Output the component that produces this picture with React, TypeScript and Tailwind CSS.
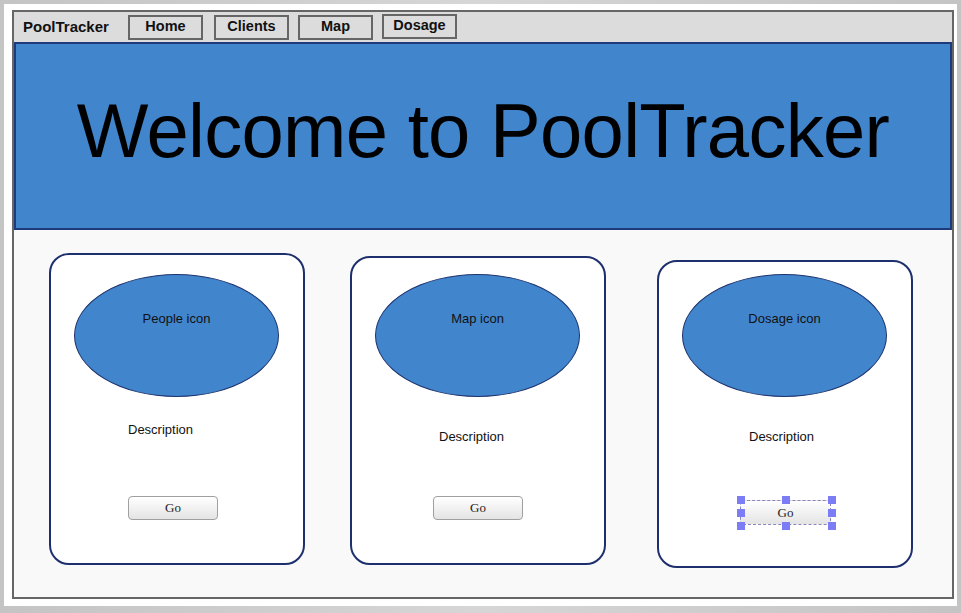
const navItems = [
  { label: 'Home', cls: 'ml-0' },
  { label: 'Clients', cls: 'ml-[11px]' },
  { label: 'Map', cls: 'ml-[9px]' },
  { label: 'Dosage', cls: 'ml-[9px] -mt-[2px]' },
]

const cards = [
  {
    label: 'People icon',
    card: 'mt-[23px] ml-[35px] h-[312px]',
    ellipse: 'mt-[19px]',
    desc: 'mt-[25px] ml-[77px]',
    go: 'mt-[57px] ml-[77px]',
    selected: false,
  },
  {
    label: 'Map icon',
    card: 'mt-[26px] ml-[45px] h-[309px]',
    ellipse: 'mt-[16px]',
    desc: 'mt-[32px] ml-[87px]',
    go: 'mt-[50px] ml-[81px]',
    selected: false,
  },
  {
    label: 'Dosage icon',
    card: 'mt-[30px] ml-[51px] h-[308px]',
    ellipse: 'mt-[12px]',
    desc: 'mt-[32px] ml-[90px]',
    go: 'mt-[55px] ml-[81px]',
    selected: true,
  },
]

function Handle({ className }: { className: string }) {
  return <span className={`absolute w-[8px] h-[8px] bg-[#7c7cf4] ${className}`} />
}

function GoButton({ selected }: { selected: boolean }) {
  if (!selected) {
    return (
      <button className="w-[90px] h-[24px] rounded-[4px] border border-[#a0a0a0] bg-gradient-to-b from-white to-[#e4e4e4] font-['Liberation_Serif',serif] font-normal text-[13px] text-[#222]">
        Go
      </button>
    )
  }
  return (
    <div className="relative w-[91px] h-[25px]">
      <button className="w-full h-full rounded-[2px] border border-dashed border-[#8a86b8] bg-gradient-to-b from-white to-[#e4e4e4] font-['Liberation_Serif',serif] font-normal text-[13px] text-[#222]">
        Go
      </button>
      <Handle className="left-[-3px] top-[-4px]" />
      <Handle className="left-[42px] top-[-4px]" />
      <Handle className="right-[-5px] top-[-4px]" />
      <Handle className="left-[-3px] top-[9px]" />
      <Handle className="right-[-5px] top-[9px]" />
      <Handle className="left-[-3px] bottom-[-5px]" />
      <Handle className="left-[42px] bottom-[-5px]" />
      <Handle className="right-[-5px] bottom-[-5px]" />
    </div>
  )
}

export default function App() {
  return (
    <div className="w-[961px] h-[613px] bg-gradient-to-r from-[#c4c4c4] via-[#d6d6d6] to-[#c4c4c4] pt-[4px] pl-[4px] font-['Liberation_Sans',Arial,sans-serif]">
      <div className="w-[953px] h-[602px] bg-white pt-[6px] pl-[8px]">
        <div className="w-[942px] h-[589px] border-2 border-[#666] flex flex-col">
          {/* nav */}
          <div className="h-[30px] bg-[#dcdcdc] flex items-center">
            <span className="ml-[9px] w-[105px] text-[15px] font-bold text-[#111]">PoolTracker</span>
            {navItems.map((item) => (
              <div
                key={item.label}
                className={`w-[75px] h-[25px] border-2 border-[#666] bg-[#dcdcdc] flex items-center justify-center text-[14.5px] font-bold text-[#111] ${item.cls}`}
              >
                {item.label}
              </div>
            ))}
          </div>

          {/* banner */}
          <div className="h-[188px] border-2 border-[#1f3a7a] bg-[#4185cd] flex justify-center pt-[49px]">
            <h1 className="text-[76px] leading-none tracking-[-0.7px] text-black">Welcome to PoolTracker</h1>
          </div>

          {/* content */}
          <div className="flex-1 bg-[#f9f9f9] flex items-start">
            {cards.map((c) => (
              <div
                key={c.label}
                className={`w-[256px] rounded-[20px] border-2 border-[#1e2f6d] bg-white flex flex-col items-start ${c.card}`}
              >
                <div
                  className={`ml-[23px] w-[205px] h-[123px] rounded-[50%] border-[1.5px] border-[#1f356f] bg-[#4185cd] flex justify-center pt-[36px] ${c.ellipse}`}
                >
                  <span className="text-[13px] leading-[16px] text-[#111]">{c.label}</span>
                </div>
                <span className={`text-[13px] leading-[16px] text-[#111] ${c.desc}`}>Description</span>
                <div className={c.go}>
                  <GoButton selected={c.selected} />
                </div>
              </div>
            ))}
          </div>
        </div>
      </div>
    </div>
  )
}
